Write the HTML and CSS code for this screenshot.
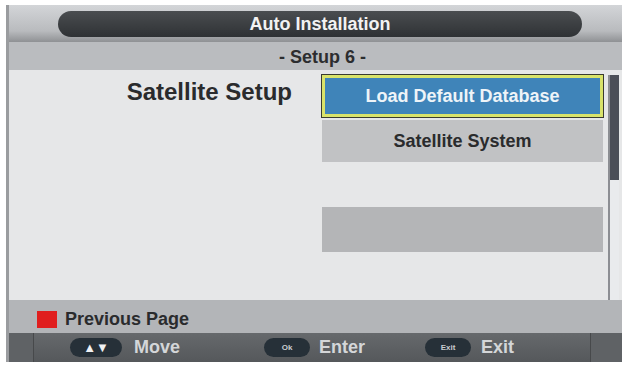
FILE: index.html
```html
<!DOCTYPE html>
<html lang="en">
<head>
  <meta charset="UTF-8" />
  <title>Auto Installation</title>
  <link rel="stylesheet" href="styles.css">
</head>
<body>
  <div class="screen">
    <div class="titlebar">
      <div class="title-pill">Auto Installation</div>
    </div>
    <div class="subtitle">- Setup 6 -</div>

    <div class="content">
      <div class="left">
        <h2 class="heading">Satellite Setup</h2>
      </div>
      <div class="menu">
        <div class="item active">Load Default Database</div>
        <div class="item">Satellite System</div>
        <div class="item empty"></div>
        <div class="item dim"></div>
      </div>
      <div class="scroll">
        <div class="thumb"></div>
      </div>
    </div>

    <div class="prev">
      <span class="red-key"></span>
      <span>Previous Page</span>
    </div>

    <div class="footer">
      <div class="cap"></div>
      <div class="hints">
        <div class="hint move"><span class="key">&#9650;&#9660;</span>Move</div>
        <div class="hint enter"><span class="key small">Ok</span>Enter</div>
        <div class="hint exit"><span class="key small">Exit</span>Exit</div>
      </div>
      <div class="cap right"></div>
    </div>
  </div>
</body>
</html>
```

FILE: styles.css
```css
body {
  margin: 0;
  background: #fff;
  font-family: "Liberation Sans", Arial, sans-serif;
}
.screen {
  margin: 5px 4px 3px 6px;
  height: 357px;
  display: flex;
  flex-direction: column;
  background: #e6e7e8;
  border-left: 3px solid #9a9c9f;
  box-sizing: border-box;
}
.titlebar {
  height: 37px;
  display: flex;
  align-items: center;
  background: linear-gradient(#d3d5d8, #b9bbbe 70%, #8f9194);
}
.title-pill {
  width: 524px;
  height: 26px;
  margin-left: 49px;
  border-radius: 13px;
  background: linear-gradient(#4a4d50, #2f3235);
  color: #f2f2f2;
  font-weight: bold;
  font-size: 18px;
  line-height: 26px;
  text-align: center;
}
.subtitle {
  height: 28px;
  line-height: 30px;
  padding-left: 14px;
  background: #babcbf;
  color: #2c2d2f;
  font-weight: bold;
  font-size: 18px;
  text-align: center;
}
.content {
  flex: 1;
  display: flex;
  padding-top: 5px;
}
.left {
  width: 313px;
}
.heading {
  margin: 3px 0 0;
  text-align: right;
  padding-right: 30px;
  font-size: 24px;
  color: #2a2b2d;
}
.menu {
  width: 281px;
  display: flex;
  flex-direction: column;
  gap: 3px;
}
.item {
  height: 42px;
  line-height: 42px;
  background: #c1c2c4;
  color: #2a2b2d;
  font-weight: bold;
  font-size: 18px;
  text-align: center;
  box-sizing: border-box;
}
.item.active {
  background: #3f84b9;
  color: #eef4f8;
  border: 3px solid #d9e36a;
  outline: 1px solid #3a3c30;
  line-height: 36px;
}
.item.empty {
  height: 39px;
  background: transparent;
}
.item.dim {
  background: #b4b5b7;
  height: 45px;
}
.scroll {
  width: 11px;
  margin-left: 5px;
  background: #e9ebed;
  border-left: 2px solid #8c8e93;
  box-sizing: border-box;
}
.thumb {
  height: 105px;
  background: #4b4e57;
}
.prev {
  height: 33px;
  display: flex;
  align-items: center;
  gap: 8px;
  padding: 6px 0 0 28px;
  box-sizing: border-box;
  background: #b3b5b8;
  color: #2a2b2d;
  font-weight: bold;
  font-size: 18px;
}
.red-key {
  width: 20px;
  height: 17px;
  background: #e01e1e;
}
.footer {
  height: 29px;
  display: flex;
  background: linear-gradient(#66696c, #55585b);
}
.cap {
  width: 24px;
  border-right: 1px solid #47494b;
  background: #5f6265;
}
.cap.right {
  width: 31px;
  border-right: 0;
  border-left: 1px solid #47494b;
}
.hints {
  flex: 1;
  display: flex;
  padding-left: 36px;
}
.hint {
  display: flex;
  align-items: center;
  gap: 12px;
  color: #d4d6d8;
  font-weight: bold;
  font-size: 18px;
}
.hint.enter {
  margin-left: 84px;
  gap: 9px;
}
.hint.exit {
  margin-left: 60px;
  gap: 10px;
}
.key {
  width: 52px;
  height: 19px;
  border-radius: 10px;
  background: #263038;
  color: #f0f2f4;
  font-size: 13px;
  line-height: 19px;
  text-align: center;
}
.key.small {
  width: 46px;
  font-size: 8px;
  color: #c8ccd0;
}
```
